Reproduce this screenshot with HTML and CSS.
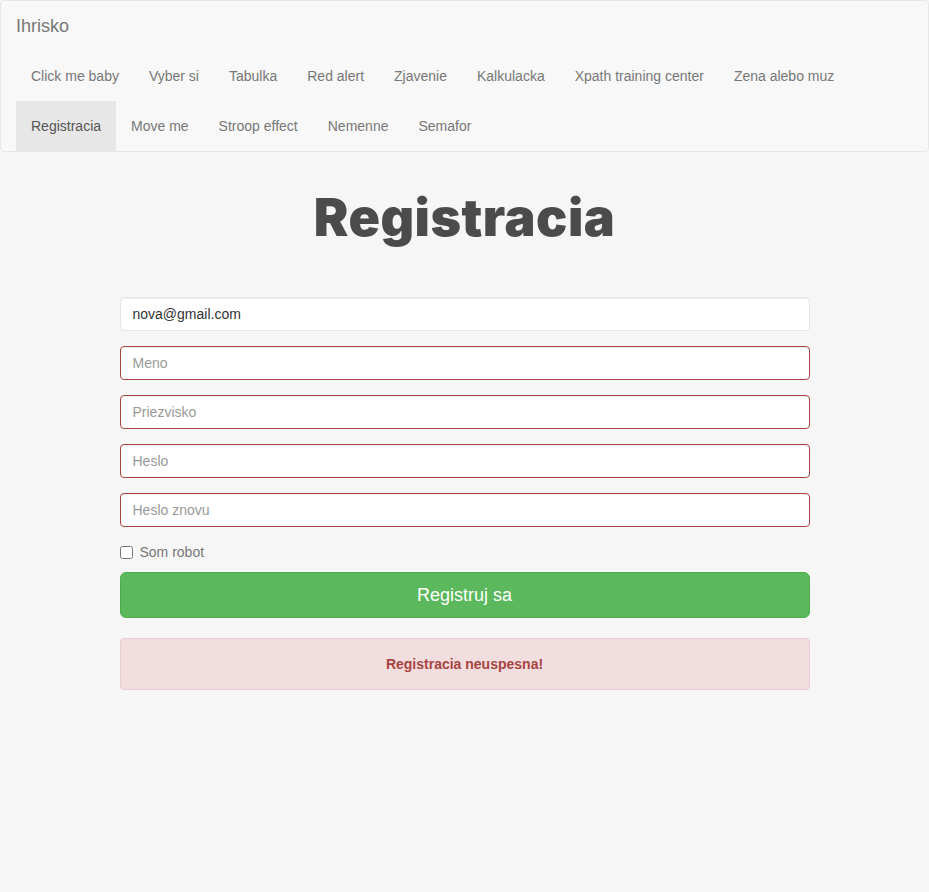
FILE: index.html
```html
<!DOCTYPE html>
<html lang="sk">
<head>
<meta charset="utf-8">
<title>Registracia</title>
<link rel="stylesheet" href="styles.css">
</head>
<body>
<nav class="navbar">
  <div class="brand">Ihrisko</div>
  <ul class="nav">
    <li><a href="#">Click me baby</a></li>
    <li><a href="#">Vyber si</a></li>
    <li><a href="#">Tabulka</a></li>
    <li><a href="#">Red alert</a></li>
    <li><a href="#">Zjavenie</a></li>
    <li><a href="#">Kalkulacka</a></li>
    <li><a href="#">Xpath training center</a></li>
    <li><a href="#">Zena alebo muz</a></li>
    <li class="active"><a href="#">Registracia</a></li>
    <li><a href="#">Move me</a></li>
    <li><a href="#">Stroop effect</a></li>
    <li><a href="#">Nemenne</a></li>
    <li><a href="#">Semafor</a></li>
  </ul>
</nav>
<main class="page">
  <h1 class="title">Registracia</h1>
  <form class="form">
    <input class="field" type="email" value="nova@gmail.com">
    <input class="field error" type="text" placeholder="Meno">
    <input class="field error" type="text" placeholder="Priezvisko">
    <input class="field error" type="password" placeholder="Heslo">
    <input class="field error" type="password" placeholder="Heslo znovu">
    <label class="check"><input type="checkbox" class="box"> Som robot</label>
    <button type="button" class="btn">Registruj sa</button>
    <div class="alert">Registracia neuspesna!</div>
  </form>
</main>
</body>
</html>
```
FILE: styles.css
```css
* { box-sizing: border-box; }
html, body { margin: 0; padding: 0; }
body {
  background: #f6f6f6;
  font-family: "Liberation Sans", Arial, sans-serif;
  font-size: 14px;
  line-height: 20px;
  color: #333;
}
.navbar {
  margin: 0;
  background: #f8f8f8;
  border: 1px solid #e7e7e7;
  border-radius: 4px;
  padding: 0 15px;
}
.brand {
  height: 50px;
  padding: 15px 0;
  font-size: 18px;
  line-height: 20px;
  color: #777;
}
.nav {
  list-style: none;
  margin: 0;
  padding: 0;
  display: flex;
  flex-wrap: wrap;
  max-width: 860px;
}
.nav a {
  display: block;
  padding: 15px;
  line-height: 20px;
  color: #777;
  text-decoration: none;
}
.nav .active a {
  background: #e7e7e7;
  color: #555;
}
.page {
  padding-top: 31px;
}
.title {
  margin: 0 0 44px;
  text-align: center;
  font-family: Inter, "Open Sans", sans-serif;
  font-weight: 900;
  font-size: 52px;
  line-height: 70px;
  letter-spacing: 0.5px;
  color: #4b4b4b;
}
.form {
  width: 690px;
  margin: 0 auto;
  display: flex;
  flex-direction: column;
}
.field {
  display: block;
  width: 100%;
  height: 34px;
  padding: 6px 12px;
  margin: 0 0 15px;
  font-family: inherit;
  font-size: 14px;
  line-height: 20px;
  color: #333;
  background: #fff;
  border: 1px solid #e6e6e6;
  border-radius: 4px;
  box-shadow: inset 0 1px 1px rgba(0,0,0,.075);
}
.field::placeholder { color: #999; }
.field.error { border-color: #a94442; }
.check {
  display: flex;
  align-items: center;
  margin: 0 0 10px;
  height: 20px;
  color: #777;
}
.box {
  width: 13px;
  height: 13px;
  margin: 0 7px 0 0;
}
.btn {
  display: block;
  width: 100%;
  height: 46px;
  padding: 10px 16px;
  font-family: inherit;
  font-size: 18px;
  line-height: 24px;
  color: #fff;
  background: #5cb85c;
  border: 1px solid #4cae4c;
  border-radius: 6px;
  margin: 0 0 20px;
}
.alert {
  padding: 15px;
  background: #f2dede;
  border: 1px solid #ebccd1;
  border-radius: 4px;
  color: #a94442;
  font-weight: bold;
  text-align: center;
}
```
